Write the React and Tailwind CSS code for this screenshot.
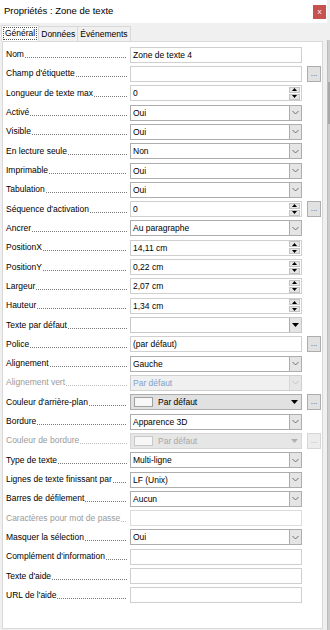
import React from 'react';

const ROWS = [
  { label: 'Nom', kind: 'text', value: 'Zone de texte 4' },
  { label: "Champ d'étiquette", kind: 'text', value: '', more: true },
  { label: 'Longueur de texte max', kind: 'spin', value: '0' },
  { label: 'Activé', kind: 'select', value: 'Oui' },
  { label: 'Visible', kind: 'select', value: 'Oui' },
  { label: 'En lecture seule', kind: 'select', value: 'Non' },
  { label: 'Imprimable', kind: 'select', value: 'Oui' },
  { label: 'Tabulation', kind: 'select', value: 'Oui' },
  { label: "Séquence d'activation", kind: 'spin', value: '0', more: true },
  { label: 'Ancrer', kind: 'select', value: 'Au paragraphe' },
  { label: 'PositionX', kind: 'spin', value: '14,11 cm' },
  { label: 'PositionY', kind: 'spin', value: '0,22 cm' },
  { label: 'Largeur', kind: 'spin', value: '2,07 cm' },
  { label: 'Hauteur', kind: 'spin', value: '1,34 cm' },
  { label: 'Texte par défaut', kind: 'combo', value: '' },
  { label: 'Police', kind: 'text', value: '(par défaut)', more: true },
  { label: 'Alignement', kind: 'select', value: 'Gauche' },
  { label: 'Alignement vert', kind: 'select', value: 'Par défaut', disabled: true },
  { label: "Couleur d'arrière-plan", kind: 'color', value: 'Par défaut', more: true },
  { label: 'Bordure', kind: 'select', value: 'Apparence 3D' },
  { label: 'Couleur de bordure', kind: 'color', value: 'Par défaut', more: true, disabled: true },
  { label: 'Type de texte', kind: 'select', value: 'Multi-ligne' },
  { label: 'Lignes de texte finissant par', kind: 'select', value: 'LF (Unix)' },
  { label: 'Barres de défilement', kind: 'select', value: 'Aucun' },
  { label: 'Caractères pour mot de passe', kind: 'text', value: '', disabled: true },
  { label: 'Masquer la sélection', kind: 'select', value: 'Oui' },
  { label: "Complément d'information", kind: 'text', value: '' },
  { label: "Texte d'aide", kind: 'text', value: '' },
  { label: "URL de l'aide", kind: 'text', value: '' },
];

function Chevron({ muted }) {
  return (
    <svg width="7" height="5" viewBox="0 0 7 5" aria-hidden="true">
      <polyline points="0.5,1 3.5,4 6.5,1" fill="none" stroke={muted ? '#c4c4c4' : '#707070'} strokeWidth="1" />
    </svg>
  );
}

function Triangle({ muted }) {
  return (
    <svg width="7" height="4" viewBox="0 0 7 4" aria-hidden="true">
      <polygon points="0,0 7,0 3.5,4" fill={muted ? '#b0b0b0' : '#000'} />
    </svg>
  );
}

function Spin() {
  return (
    <div className="flex flex-col gap-[1px] h-full justify-center pr-[1px]">
      {[0, 1].map(i => (
        <div key={i} className="w-[11px] h-[6px] bg-[#e6e6e6] border border-[#c4c4c4] flex items-center justify-center">
          <svg width="5" height="3" viewBox="0 0 5 3" aria-hidden="true">
            <polygon points={i === 0 ? '0,3 5,3 2.5,0' : '0,0 5,0 2.5,3'} fill="#000" />
          </svg>
        </div>
      ))}
    </div>
  );
}

function Field({ row }) {
  const { kind, value, disabled } = row;
  if (kind === 'select') {
    return (
      <div className={`h-[16px] flex border ${disabled ? 'border-[#cfcfcf] bg-[#f0f0f0]' : 'border-[#adadad] bg-white'}`}>
        <span className={`flex-1 pl-[2px] leading-[14px] ${disabled ? 'text-[#7ea3cc]' : 'text-black'}`}>{value}</span>
        <span className={`w-[12px] flex items-center justify-center border-l ${disabled ? 'border-[#d6d6d6] bg-[#e6e6e6]' : 'border-[#adadad] bg-[#e5e5e5]'}`}>
          <Chevron muted={disabled} />
        </span>
      </div>
    );
  }
  if (kind === 'combo') {
    return (
      <div className="h-[16px] flex border border-[#c8c8c8] bg-white">
        <span className="flex-1" />
        <span className="w-[12px] flex items-center justify-center border-l border-[#adadad] bg-[#e5e5e5]">
          <Triangle />
        </span>
      </div>
    );
  }
  if (kind === 'color') {
    return (
      <div className={`h-[16px] flex items-center border ${disabled ? 'border-[#d6d6d6] bg-[#e6e6e6]' : 'border-[#adadad] bg-[#e1e1e1]'}`}>
        <span className={`ml-[3px] w-[19px] h-[10px] border ${disabled ? 'border-[#c8c8c8] bg-[#f7f7f7]' : 'border-[#a0a0a0] bg-[#f7f7f7]'}`} />
        <span className={`flex-1 pl-[5px] leading-[14px] ${disabled ? 'text-[#a8a8a8]' : 'text-black'}`}>{value}</span>
        <span className="w-[14px] flex items-center justify-center">
          <Triangle muted={disabled} />
        </span>
      </div>
    );
  }
  return (
    <div className={`h-[16px] flex border ${disabled ? 'border-[#dcdcdc]' : 'border-[#cfcfcf]'} bg-white`}>
      <span className="flex-1 pl-[2px] leading-[14px] text-black">{value}</span>
      {kind === 'spin' && <Spin />}
    </div>
  );
}

function MoreButton({ disabled }) {
  return (
    <div className={`w-[14px] h-[16px] flex items-end justify-center pb-[3px] border text-[8px] leading-none ${
      disabled ? 'border-[#d6d6d6] bg-[#ececec] text-[#b0b0b0]' : 'border-[#adadad] bg-[#e1e1e1] text-[#5a4a7a]'
    }`}>
      ...
    </div>
  );
}

function Row({ row }) {
  return (
    <div className="h-[19.32px] flex items-center">
      <div className={`w-[121px] flex items-end whitespace-nowrap ${row.disabled ? 'text-[#9a9a9a]' : 'text-black'}`}>
        <span className="leading-[11px]">{row.label}</span>
        <span
          className={`flex-1 h-[1px] mb-[2px] ml-[1px] bg-repeat-x bg-[length:2px_1px] ${
            row.disabled
              ? 'bg-[linear-gradient(to_right,#c0c0c0_1px,transparent_1px)]'
              : 'bg-[linear-gradient(to_right,#7a7a7a_1px,transparent_1px)]'
          }`}
        />
      </div>
      <div className="ml-[3px] w-[172px]">
        <Field row={row} />
      </div>
      <div className="ml-[5px] w-[14px]">
        {row.more && <MoreButton disabled={row.disabled} />}
      </div>
    </div>
  );
}

export default function App() {
  return (
    <div
      className="w-[330px] h-[630px] flex bg-[#f0f0f0] text-[8.5px] overflow-hidden"
      style={{ fontFamily: '"Liberation Sans", Arial, sans-serif' }}
    >
      <div className="w-[327px] flex flex-col">
        <div className="h-[23px] bg-white flex items-center justify-between pl-[4px] pr-[1px]">
          <span className="text-[9.5px] text-black">Propriétés : Zone de texte</span>
          <span className="w-[13px] h-[14px] bg-[#c75050] flex items-center justify-center text-white text-[8px] leading-none">
            x
          </span>
        </div>
        <div className="h-[17px] flex items-end pl-[1px] mt-[1px]">
          <div className="h-[16px] px-[1px] bg-white border border-b-0 border-[#d9d9d9] flex items-center">
            <span className="px-[1px] border border-dotted border-[#555] leading-[11px]">Général</span>
          </div>
          <div className="h-[15px] px-[2px] border border-l-0 border-b-0 border-[#d9d9d9] flex items-center">Données</div>
          <div className="h-[15px] px-[2px] border border-l-0 border-b-0 border-[#d9d9d9] flex items-center">Événements</div>
        </div>
        <div className="flex-1 ml-[2px] mr-[4px] mb-[1px] bg-white border border-[#d9d9d9] pt-[3px] pl-[3px]">
          {ROWS.map(r => (
            <Row key={r.label} row={r} />
          ))}
        </div>
      </div>
      <div className="w-[3px] flex flex-col">
        <div className="h-[40px] bg-[#f0f0f0]" />
        <div className="flex-1 bg-[#cdcdcd] border-l border-[#bdbdbd] flex flex-col">
          <div className="h-[42px]" />
          <div className="h-[42px] bg-[#a8a8a8]" />
        </div>
      </div>
    </div>
  );
}
